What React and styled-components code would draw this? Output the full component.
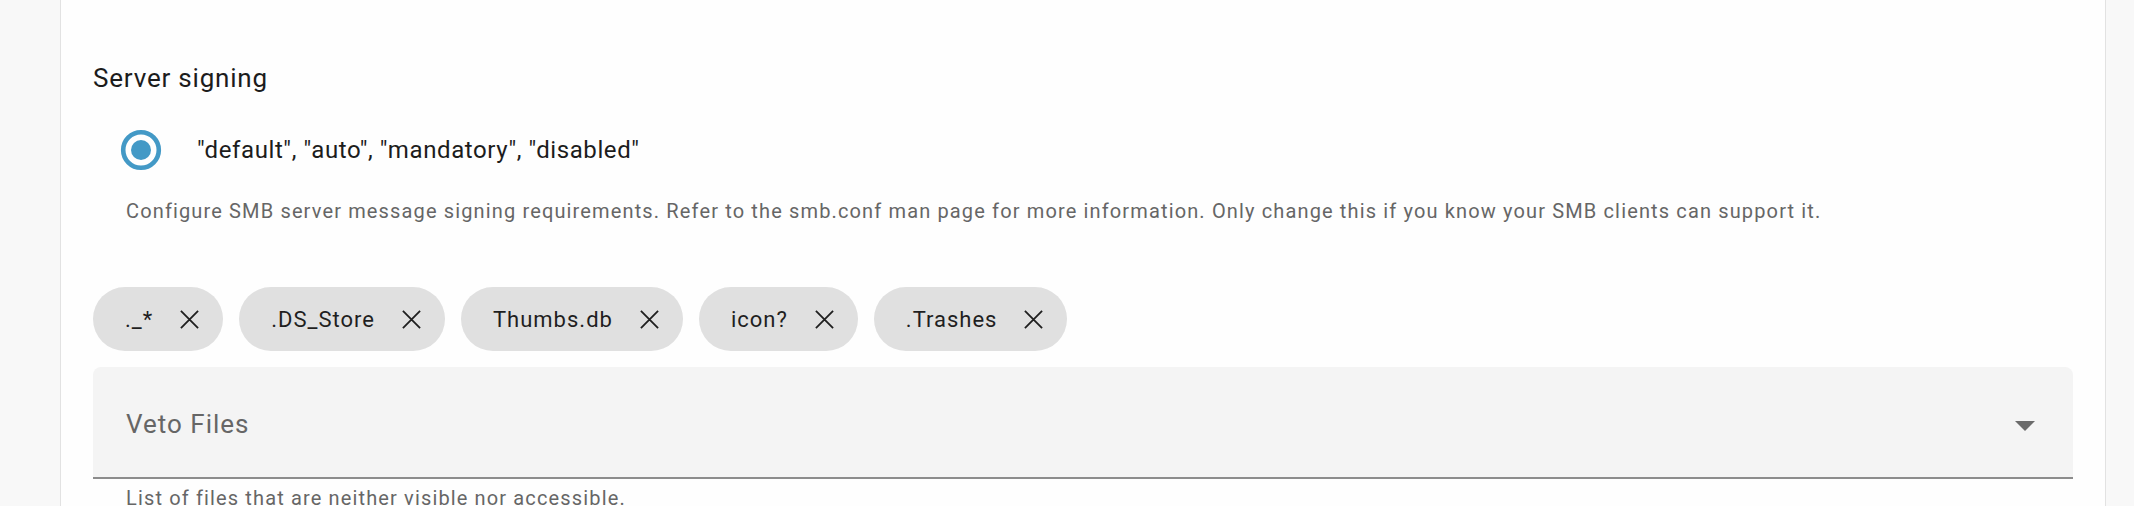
import styled, { createGlobalStyle } from "styled-components";

const GlobalStyle = createGlobalStyle`
  html, body {
    margin: 0;
    padding: 0;
    background: #f8f8f8;
    font-family: Roboto, "Liberation Sans", sans-serif;
  }
`;

const chips = ["._*", ".DS_Store", "Thumbs.db", "icon?", ".Trashes"];

export default function App() {
  return (
    <>
      <GlobalStyle />
      <Page>
        <Card>
          <Title>Server signing</Title>
          <RadioRow>
            <RadioIcon viewBox="0 0 24 24">
              <circle cx="12" cy="12" r="8.9" fill="none" stroke="#4399c6" strokeWidth="2.3" />
              <circle cx="12" cy="12" r="5" fill="#4399c6" />
            </RadioIcon>
            <RadioLabel>"default", "auto", "mandatory", "disabled"</RadioLabel>
          </RadioRow>
          <Helper $top={24}>
            Configure SMB server message signing requirements. Refer to the smb.conf man page for more
            information. Only change this if you know your SMB clients can support it.
          </Helper>

          <ChipRow>
            {chips.map((c) => (
              <Chip key={c}>
                <span>{c}</span>
                <DeleteIcon viewBox="0 0 22 22">
                  <path d="M2 2L20 20M20 2L2 20" stroke="#1f1f1f" strokeWidth="1.9" fill="none" />
                </DeleteIcon>
              </Chip>
            ))}
          </ChipRow>

          <SelectField>
            <Placeholder>Veto Files</Placeholder>
            <Arrow viewBox="0 0 20 10">
              <path d="M0 0L10 10L20 0Z" fill="#6b6b6b" />
            </Arrow>
          </SelectField>
          <Helper $top={6}>List of files that are neither visible nor accessible.</Helper>
        </Card>
      </Page>
    </>
  );
}

const Page = styled.div`
  padding: 0 28px 0 60px;
  height: 506px;
  overflow: hidden;
`;

const Card = styled.div`
  background: #fefefe;
  border-left: 1.5px solid #e2e2e2;
  border-right: 1.5px solid #e2e2e2;
  padding: 62px 32px 40px 32px;
  min-height: 600px;
`;

const Title = styled.div`
  font-size: 26px;
  line-height: 32px;
  letter-spacing: 0.8px;
  color: #1c1c1c;
`;

const RadioRow = styled.div`
  display: flex;
  align-items: center;
  gap: 32px;
  height: 48px;
  margin-top: 32px;
  padding-left: 24px;
`;

const RadioIcon = styled.svg`
  width: 48px;
  height: 48px;
  flex-shrink: 0;
`;

const RadioLabel = styled.span`
  font-size: 24px;
  letter-spacing: 0.6px;
  color: #1c1c1c;
`;

const Helper = styled.div`
  margin-top: ${(p) => p.$top}px;
  padding-left: 33px;
  font-size: 20px;
  line-height: 27px;
  letter-spacing: 1.14px;
  color: #666;
`;

const ChipRow = styled.div`
  display: flex;
  gap: 16px;
  margin-top: 62px;
`;

const Chip = styled.div`
  display: flex;
  align-items: center;
  gap: 26px;
  height: 64px;
  padding: 0 23px 0 32px;
  border-radius: 32px;
  background: #e0e0e0;
  font-size: 22px;
  letter-spacing: 1px;
  color: #1f1f1f;
`;

const DeleteIcon = styled.svg`
  width: 21px;
  height: 21px;
`;

const SelectField = styled.div`
  margin-top: 16px;
  height: 110px;
  display: flex;
  align-items: center;
  justify-content: space-between;
  padding: 0 38px 0 33px;
  background: #f4f4f4;
  border-radius: 8px 8px 0 0;
  border-bottom: 2px solid #8c8c8c;
`;

const Placeholder = styled.span`
  font-size: 26px;
  letter-spacing: 1px;
  color: #666;
  margin-top: 4px;
`;

const Arrow = styled.svg`
  width: 20px;
  height: 10px;
  margin-top: 8px;
`;
